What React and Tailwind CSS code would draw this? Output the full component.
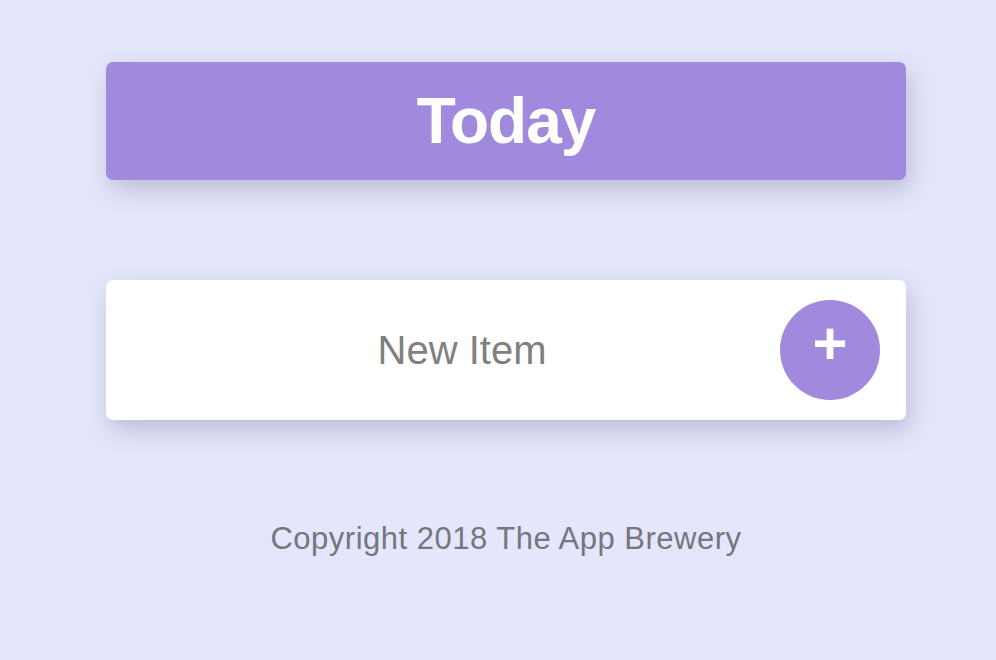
import { useState } from 'react';

export default function App() {
  const [text, setText] = useState('');

  return (
    <div className="min-h-[660px] w-full bg-[#e4e7fb] overflow-hidden" style={{ fontFamily: '"Liberation Sans", Arial, sans-serif' }}>
      <div className="w-[800px] ml-[106px] pt-[62px] flex flex-col">
        {/* heading */}
        <div className="h-[118px] rounded-[7px] bg-[#a18add] flex items-center justify-center shadow-[4px_10px_24px_rgba(40,40,90,0.22)]">
          <h1 className="text-[64px] font-bold text-white tracking-[-1px] leading-none">Today</h1>
        </div>

        {/* input row */}
        <div className="mt-[100px] h-[140px] rounded-[7px] bg-white flex items-center pl-[38px] pr-[26px] shadow-[4px_10px_24px_rgba(40,40,90,0.22)]">
          <input
            value={text}
            onChange={e => setText(e.target.value)}
            placeholder="New Item"
            className="flex-1 min-w-0 text-center text-[40px] text-[#808080] placeholder:text-[#808080] bg-transparent outline-none"
          />
          <button className="w-[100px] h-[100px] rounded-full bg-[#a18add] flex items-center justify-center text-white text-[60px] font-bold leading-none pb-[12px]">+</button>
        </div>

        <p className="mt-[104px] text-center text-[31px] leading-[30px] tracking-[0.5px] text-[#75767f]">Copyright 2018 The App Brewery</p>
      </div>
    </div>
  );
}
